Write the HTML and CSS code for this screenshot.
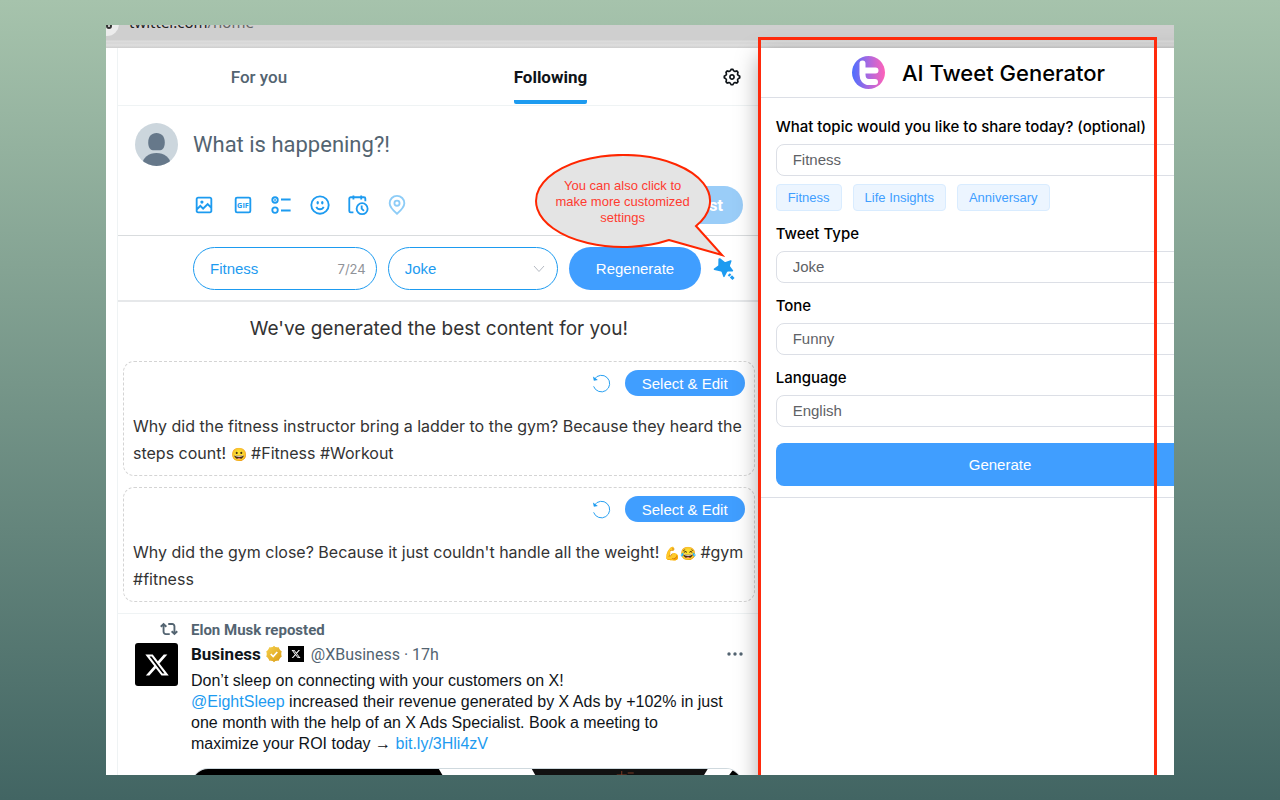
FILE: index.html
```html
<!DOCTYPE html>
<html lang="en">
<head>
<meta charset="utf-8">
<meta name="viewport" content="width=device-width, initial-scale=1">
<title>AI Tweet Generator</title>
<link rel="stylesheet" href="styles.css">
</head>
<body>
<div class="stage">
  <div class="browser-bar">
    <svg class="site-icon" viewBox="0 0 24 24" aria-hidden="true"><circle cx="12" cy="12" r="12" fill="#ececec"/><circle cx="8" cy="13" r="2" fill="none" stroke="#333" stroke-width="2"/><circle cx="14" cy="14" r="2" fill="none" stroke="#333" stroke-width="2"/></svg>
    <span class="address">twitter.com<span class="address-path">/home</span></span>
  </div>
  <div class="content">
    <main class="feed">
      <nav class="tabs">
        <a class="tab" href="#">For you</a>
        <a class="tab tab-active" href="#"><span class="tab-label">Following</span></a>
        <button class="icon-button settings" aria-label="Timeline settings">
          <svg viewBox="0 0 24 24" aria-hidden="true"><path d="M10.54 1.75h2.92l1.57 2.36c.11.17.32.25.53.21l2.53-.59 2.17 2.17-.58 2.54c-.05.2.04.41.21.53l2.36 1.57v2.92l-2.36 1.57c-.17.12-.26.33-.21.53l.58 2.54-2.17 2.17-2.53-.59c-.21-.04-.42.04-.53.21l-1.57 2.36h-2.92l-1.58-2.36c-.11-.17-.32-.25-.52-.21l-2.54.59-2.17-2.17.58-2.54c.05-.2-.03-.41-.21-.53l-2.35-1.57v-2.92L4.1 8.97c.18-.12.26-.33.21-.53L3.73 5.9 5.9 3.73l2.54.59c.2.04.41-.04.52-.21l1.58-2.36zm1.07 2l-.98 1.47C10.05 6.08 9 6.5 7.99 6.27l-1.46-.34-.6.6.33 1.46c.24 1.01-.18 2.07-1.05 2.64l-1.46.98v.78l1.46.98c.87.57 1.29 1.63 1.05 2.64l-.33 1.46.6.6 1.46-.34c1.01-.23 2.06.19 2.64 1.05l.98 1.47h.78l.97-1.47c.58-.86 1.63-1.28 2.65-1.05l1.45.34.61-.6-.34-1.46c-.23-1.01.18-2.07 1.05-2.64l1.47-.98v-.78l-1.47-.98c-.87-.57-1.28-1.63-1.05-2.64l.34-1.46-.61-.6-1.45.34c-1.02.23-2.07-.19-2.65-1.05l-.97-1.47h-.78zM12 10.5c-.83 0-1.5.67-1.5 1.5s.67 1.5 1.5 1.5c.82 0 1.5-.67 1.5-1.5s-.68-1.5-1.5-1.5zM8.5 12c0-1.93 1.56-3.5 3.5-3.5 1.93 0 3.5 1.57 3.5 3.5s-1.57 3.5-3.5 3.5c-1.94 0-3.5-1.57-3.5-3.5z"/></svg>
        </button>
      </nav>

      <section class="composer">
        <svg class="avatar" viewBox="0 0 43 43" aria-hidden="true">
          <defs><clipPath id="avatar-clip"><circle cx="21.500" cy="21.500" r="21.500"/></clipPath></defs>
          <g clip-path="url(#avatar-clip)"><rect width="43" height="43" fill="#ccd6dd"/><path d="M21.500 10c5 0 8.300 3.500 8.300 9.500 0 5-2.300 7.700-4.500 7.700h-7.600c-2.200 0-4.500-2.700-4.500-7.700 0-6 3.300-9.500 8.300-9.500z" fill="#66788a"/><ellipse cx="21.500" cy="41" rx="14" ry="11" fill="#66788a"/></g>
        </svg>
        <div class="composer-body">
          <input class="compose-input" type="text" placeholder="What is happening?!" aria-label="Post text">
          <div class="composer-actions">
            <div class="composer-tools">
              <button class="icon-button" aria-label="Media"><svg viewBox="0 0 24 24"><path d="M3 5.500C3 4.119 4.119 3 5.500 3h13C19.881 3 21 4.119 21 5.500v13c0 1.381-1.119 2.500-2.500 2.500h-13C4.119 21 3 19.881 3 18.500v-13zM5.500 5c-.276 0-.5.224-.5.5v9.086l3-3 3 3 5-5 3 3V5.500c0-.276-.224-.5-.5-.5h-13zM19 15.414l-3-3-5 5-3-3-3 3V18.500c0 .276.224.5.5.5h13c.276 0 .5-.224.5-.5v-3.086zM9.750 7C8.784 7 8 7.784 8 8.750s.784 1.750 1.750 1.750 1.750-.784 1.750-1.750S10.716 7 9.750 7z"/></svg></button>
              <button class="icon-button" aria-label="GIF"><svg viewBox="0 0 24 24"><rect class="line" x="4" y="4" width="16" height="16" rx="1.500"/><text class="gif-text" x="12" y="15" text-anchor="middle">GIF</text></svg></button>
              <button class="icon-button" aria-label="Poll"><svg viewBox="0 0 24 24"><g class="line"><circle cx="5.500" cy="6.500" r="3"/><circle cx="5.500" cy="17.500" r="3"/><path d="M12 6h10.500M12 18h10.500"/></g><circle cx="5.500" cy="6.500" r="1"/></svg></button>
              <button class="icon-button" aria-label="Emoji"><svg viewBox="0 0 24 24"><g class="line"><circle cx="12" cy="12" r="9.500"/><path d="M8 14c1.500 3.500 6.500 3.500 8 0"/></g><ellipse cx="9.500" cy="9.500" rx="1.300" ry="2"/><ellipse cx="14.500" cy="9.500" rx="1.300" ry="2"/></svg></button>
              <button class="icon-button" aria-label="Schedule"><svg viewBox="0 0 24 24"><g class="line"><path d="M7 1.500V6M15.500 1.500V6M20 8V5c0-.8-.7-1.500-1.500-1.500H4C3.200 3.500 2.500 4.200 2.500 5v13.500c0 .8.700 1.500 1.500 1.500h3"/><circle cx="16.500" cy="16" r="6"/><path d="M16 12.500V16l2.500 2.500"/></g></svg></button>
              <button class="icon-button" aria-label="Location" disabled><svg viewBox="0 0 24 24"><g class="line"><path d="M12 21.500C8.500 18.500 4 14.500 4 10a8 8 0 0116 0c0 4.500-4.500 8.500-8 11.500z"/><circle cx="12" cy="10" r="2.800"/></g></svg></button>
            </div>
            <button class="post-button" disabled>Post</button>
          </div>
        </div>
      </section>

      <section class="ai-toolbar">
        <div class="pill-field">
          <input class="pill-input" type="text" value="Fitness" maxlength="24" aria-label="Topic">
          <span class="counter">7/24</span>
        </div>
        <div class="pill-field">
          <select class="pill-input" aria-label="Tweet type"><option>Joke</option></select>
          <svg class="chevron" viewBox="0 0 12 8" aria-hidden="true"><path d="M1 1l5 5.500L11 1"/></svg>
        </div>
        <button class="primary regenerate">Regenerate</button>
        <button class="icon-button magic" aria-label="More settings">
          <svg viewBox="0 0 24 24"><path d="M8.500 1.500l4 3.200c.3.200.6.300 1 .2l5-1.700c.7-.2 1.200.3 1 1l-1.500 4.300c-.1.400 0 .7.200 1l2.800 3.800c.4.600.1 1.200-.6 1.200h-4.400c-.4 0-.7.200-.9.500l-2.500 4.700c-.3.600-1 .6-1.300 0l-1.600-4.500c-.1-.3-.4-.6-.8-.7L2.300 13c-.7-.2-.8-1-.2-1.400l3.800-2.800c.3-.2.400-.5.400-.9l.1-5.700c0-.9 1.300-1.400 2.100-.7z"/><path d="M16.800 17.300l4.700 4.700" class="wand"/></svg>
        </button>
        <div class="callout">
          <svg class="callout-shape" viewBox="0 0 190 104" aria-hidden="true"><path d="M134 86L187 101L161 72A87 46 0 1 0 134 86Z"/></svg>
          <p class="callout-text">You can also click to make more customized settings</p>
        </div>
      </section>

      <section class="results">
        <h2 class="results-title">We've generated the best content for you!</h2>
        <article class="suggestion">
          <div class="suggestion-actions">
            <button class="icon-button refresh" aria-label="Regenerate this one"><svg viewBox="0 0 20 20"><path class="arc" d="M2.500 5.500a8.700 8.700 0 11-.8 7.500"/><path d="M1 2.500l1 4.500 4.200-.6z"/></svg></button>
            <button class="primary select-edit">Select &amp; Edit</button>
          </div>
          <p class="suggestion-text">Why did the fitness instructor bring a ladder to the gym? Because they heard the steps count! <span class="emoji">😀</span> #Fitness #Workout</p>
        </article>
        <article class="suggestion">
          <div class="suggestion-actions">
            <button class="icon-button refresh" aria-label="Regenerate this one"><svg viewBox="0 0 20 20"><path class="arc" d="M2.500 5.500a8.700 8.700 0 11-.8 7.500"/><path d="M1 2.500l1 4.500 4.200-.6z"/></svg></button>
            <button class="primary select-edit">Select &amp; Edit</button>
          </div>
          <p class="suggestion-text">Why did the gym close? Because it just couldn't handle all the weight! <span class="emoji">💪😂</span> #gym #fitness</p>
        </article>
      </section>

      <article class="post">
        <div class="post-gutter">
          <svg class="repost-icon" viewBox="0 0 24 24" aria-hidden="true"><path d="M4.750 3.790l4.603 4.300-1.706 1.820L6 8.380v7.370c0 .97.784 1.750 1.750 1.750H13V20H7.750c-2.347 0-4.250-1.900-4.250-4.250V8.380L1.853 9.910.147 8.090l4.603-4.300zm11.500 2.710H11V4h5.250c2.347 0 4.250 1.900 4.250 4.250v7.370l1.647-1.530 1.706 1.820-4.603 4.300-4.603-4.300 1.706-1.820L18 15.620V8.250c0-.97-.784-1.750-1.750-1.750z"/></svg>
          <svg class="brand-avatar" viewBox="0 0 43 43" aria-hidden="true"><rect width="43" height="43" rx="3"/><svg x="9" y="9" width="26" height="26" viewBox="0 0 24 24"><path fill="#fff" d="M18.244 2.250h3.308l-7.227 8.260 8.502 11.240H16.170l-5.214-6.817L4.990 21.750H1.680l7.730-8.835L1.254 2.250H8.080l4.713 6.231zm-1.161 17.520h1.833L7.084 4.126H5.117z"/></svg></svg>
        </div>
        <div class="post-body">
          <p class="reposted">Elon Musk reposted</p>
          <header class="post-header">
            <strong class="author">Business</strong>
            <svg class="verified" viewBox="0 0 22 22" aria-hidden="true"><defs><linearGradient id="gold" x1="0" y1="0" x2="1" y2="1"><stop offset="0" stop-color="#f6d24e"/><stop offset="1" stop-color="#d99a13"/></linearGradient></defs><g fill="url(#gold)"><circle cx="11" cy="11" r="9"/><path d="M11 1l2.500 2.300 3.400-.4.700 3.300 3 1.700L19.200 11l1.400 3.100-3 1.700-.7 3.300-3.400-.4L11 21l-2.500-2.300-3.400.4-.7-3.300-3-1.700L2.800 11 1.400 7.900l3-1.700.7-3.300 3.400.4z"/></g><path d="M7 11l3 3 5-5.500" fill="none" stroke="#fff" stroke-width="2"/></svg>
            <svg class="affiliate" viewBox="0 0 16 16" aria-hidden="true"><rect width="16" height="16"/><svg x="3" y="3" width="10" height="10" viewBox="0 0 24 24"><path fill="#fff" d="M18.244 2.250h3.308l-7.227 8.260 8.502 11.240H16.170l-5.214-6.817L4.990 21.750H1.680l7.730-8.835L1.254 2.250H8.080l4.713 6.231zm-1.161 17.520h1.833L7.084 4.126H5.117z"/></svg></svg>
            <span class="handle">@XBusiness · 17h</span>
            <button class="icon-button more" aria-label="More"><svg viewBox="0 0 16 4"><circle cx="2" cy="2" r="1.700"/><circle cx="8" cy="2" r="1.700"/><circle cx="14" cy="2" r="1.700"/></svg></button>
          </header>
          <p class="post-text">Don’t sleep on connecting with your customers on X!<br><a href="#">@EightSleep</a> increased their revenue generated by X Ads by +102% in just one month with the help of an X Ads Specialist. Book a meeting to maximize your ROI today → <a href="#">bit.ly/3Hli4zV</a></p>
          <div class="media">
            <svg viewBox="0 0 550 300" preserveAspectRatio="xMidYMin slice" aria-hidden="true"><rect width="550" height="300" fill="#fff"/><path d="M0 0h247l180 300H0z"/><path d="M340 0h176l-90 150z" fill="#111"/><path d="M430 2v4M425 6h10M436 4h6" stroke="#7a3b25"/><path d="M542 0l-30 40h38V0z"/></svg>
          </div>
        </div>
      </article>
    </main>

    <aside class="side">
      <form class="panel">
        <header class="panel-header">
          <svg class="logo" viewBox="0 0 33 33" aria-hidden="true"><defs><linearGradient id="brand" x1="0" y1="0" x2="1" y2="0"><stop offset="0" stop-color="#4b6fff"/><stop offset=".55" stop-color="#b468dc"/><stop offset="1" stop-color="#ff62b8"/></linearGradient></defs><circle cx="16.500" cy="16.500" r="16.500" fill="url(#brand)"/><path d="M10.500 7.500v11c0 4.500 2.500 7.500 6.500 7.500h6M10.500 14.500h13" fill="none" stroke="#fff" stroke-width="6" stroke-linecap="round" stroke-linejoin="round"/></svg>
          <h1 class="panel-title">AI Tweet Generator</h1>
        </header>
        <div class="fields">
          <div class="field">
            <label for="topic">What topic would you like to share today? (optional)</label>
            <input class="control" id="topic" type="text" value="Fitness">
            <div class="chips">
              <button type="button" class="chip">Fitness</button>
              <button type="button" class="chip">Life Insights</button>
              <button type="button" class="chip">Anniversary</button>
            </div>
          </div>
          <div class="field">
            <label for="type">Tweet Type</label>
            <select class="control" id="type"><option>Joke</option></select>
          </div>
          <div class="field">
            <label for="tone">Tone</label>
            <select class="control" id="tone"><option>Funny</option></select>
          </div>
          <div class="field">
            <label for="language">Language</label>
            <select class="control" id="language"><option>English</option></select>
          </div>
          <button type="button" class="primary generate">Generate</button>
        </div>
      </form>
      <div class="highlight"></div>
    </aside>
  </div>
</div>
</body>
</html>
```
FILE: styles.css
```css
* { box-sizing: border-box; }

body {
  margin: 0;
  height: 100vh;
  padding: 25px 106px;
  overflow: hidden;
  background: linear-gradient(#a6c3ac, #426563);
  font-family: "Liberation Sans", Arial, sans-serif;
  color: #333;
}

p, h1, h2 { margin: 0; }
a { color: #1d9bf0; text-decoration: none; }
button, input, select { font: inherit; color: inherit; }
button { border: 0; padding: 0; background: none; cursor: pointer; }

.stage {
  display: flex;
  flex-direction: column;
  height: 100%;
  overflow: hidden;
  background: #fff;
}

.browser-bar {
  flex: none;
  display: flex;
  height: 23px;
  overflow: hidden;
  background: linear-gradient(#cfcfcf 15px, #dedede 16px, #d6d6d6 18px, #dfdfdf 20px, #d4d4d4 22px, #cccccc);
}
.site-icon { width: 24px; height: 24px; margin: -13px 0 0 -11px; }
.address {
  margin: -13px 0 0 10px;
  font: 15px/20px "Noto Sans", sans-serif;
  color: #222;
}
.address-path { color: #666; }

.content {
  flex: 1;
  min-height: 0;
  display: grid;
  grid-template-columns: minmax(0, 11fr) minmax(0, 7fr);
}

.feed {
  margin-left: 11px;
  border-left: 1px solid #eff3f4;
  font-family: Roboto, sans-serif;
}

.icon-button { display: flex; align-items: center; justify-content: center; }
.icon-button svg { display: block; width: 22px; height: 22px; fill: currentColor; }
.icon-button .line { fill: none; stroke: currentColor; stroke-width: 2; }

.tabs {
  display: grid;
  grid-template-columns: 44% 47% auto;
  height: 58px;
  border-bottom: 1px solid #eff3f4;
}
.tab {
  display: flex;
  justify-content: center;
  color: #536471;
  font-size: 17px;
  font-weight: 500;
  line-height: 58px;
}
.tab-active { color: #0f1419; font-weight: 700; }
.tab-label {
  height: 56px;
  border-bottom: 4px solid #1d9bf0;
  border-radius: 2px;
}
.settings { color: #0f1419; justify-content: flex-start; padding-left: 21px; }
.settings svg { width: 20px; }

.composer {
  display: flex;
  gap: 15px;
  padding: 17px 16px 11px 17px;
}
.avatar { flex: none; width: 43px; height: 43px; }
.composer-body { flex: 1; min-width: 0; }
.compose-input {
  display: block;
  width: 100%;
  height: 43px;
  padding: 0;
  border: 0;
  outline: 0;
  background: none;
  font-size: 22px;
}
.compose-input::placeholder { color: #536471; opacity: 1; }
.composer-actions {
  display: flex;
  justify-content: space-between;
  align-items: center;
  margin-top: 20px;
}
.composer-tools {
  display: flex;
  justify-content: space-between;
  width: 215px;
  color: #1d9bf0;
}
.composer-tools [disabled] { opacity: 0.5; }
.gif-text { font: 700 8px "Open Sans", sans-serif; }
.post-button {
  width: 74px;
  height: 38px;
  border-radius: 19px;
  background: #9acdf8;
  color: #fff;
  font-size: 17px;
  font-weight: 700;
}

.ai-toolbar {
  position: relative;
  display: grid;
  grid-template-columns: minmax(0, 14fr) minmax(0, 13fr) minmax(0, 10fr) 24px;
  gap: 11px;
  padding: 11px 23px 10px 75px;
  border-top: 1px solid #d9dcde;
  border-bottom: 2px solid #e6e8ea;
  font-family: "Liberation Sans", Arial, sans-serif;
}
.pill-field {
  display: flex;
  align-items: center;
  height: 43px;
  padding: 0 10px 0 16px;
  border: 1px solid #1d9bf0;
  border-radius: 22px;
}
.pill-input {
  flex: 1;
  min-width: 0;
  padding: 0;
  border: 0;
  outline: 0;
  appearance: none;
  background: none;
  color: #1d9bf0;
  font-size: 15px;
}
.counter { color: #909399; font: 13px Inter, sans-serif; }
.chevron { width: 12px; height: 8px; margin-right: 2px; fill: none; stroke: #b4b9c2; }
.primary { background: #409eff; color: #fff; font-size: 15px; }
.regenerate { border-radius: 22px; }
.magic { color: #1d9bf0; }
.magic svg { width: 24px; height: 24px; }
.wand { fill: none; stroke: currentColor; stroke-width: 3; stroke-dasharray: 2 1 4; }

.callout {
  position: absolute;
  top: -82px;
  right: 34px;
  width: 190px;
}
.callout-shape { display: block; width: 100%; fill: #e4e4e4; stroke: #ff2600; stroke-width: 2; }
.callout-text {
  position: absolute;
  top: 24px;
  left: 18px;
  width: 140px;
  color: #ff3b30;
  font-size: 13px;
  line-height: 16px;
  text-align: center;
}

.results {
  padding: 14px 4px 11px 5px;
  border-bottom: 1px solid #eff3f4;
  font-family: Inter, sans-serif;
}
.results-title {
  margin-bottom: 19px;
  font-size: 19px;
  font-weight: 400;
  line-height: 26px;
  text-align: center;
}
.suggestion {
  height: 115px;
  padding: 8px 9px;
  border: 1px dashed #d4d4d4;
  border-radius: 11px;
}
.suggestion + .suggestion { margin-top: 11px; }
.suggestion-actions { display: flex; justify-content: flex-end; gap: 14px; }
.refresh { color: #1d9bf0; }
.refresh svg { width: 19px; height: 19px; }
.refresh .arc { fill: none; stroke: currentColor; stroke-width: 1; }
.select-edit {
  width: 120px;
  height: 26px;
  border-radius: 13px;
  font-family: "Liberation Sans", Arial, sans-serif;
}
.suggestion-text { margin-top: 17px; font-size: 16px; line-height: 27px; }
.emoji { font-size: 13px; line-height: 1; }

.post { display: flex; gap: 13px; padding: 6px 16px 0 17px; }
.post-gutter { display: flex; flex-direction: column; align-items: flex-end; gap: 5px; flex: none; }
.repost-icon { width: 18px; height: 18px; fill: #536471; }
.brand-avatar { width: 43px; height: 43px; }
.post-body { flex: 1; min-width: 0; color: #0f1419; }
.reposted { color: #536471; font-size: 15px; font-weight: 700; line-height: 20px; }
.post-header { display: flex; align-items: center; gap: 4px; height: 28px; margin-bottom: 2px; font-size: 16px; }
.author { font-size: 17px; }
.verified { width: 18px; height: 18px; }
.affiliate { width: 16px; height: 16px; margin-left: 1px; }
.handle { color: #536471; margin-left: 3px; }
.more { margin-left: auto; color: #536471; }
.more svg { width: 16px; height: 4px; }
.post-text { padding-right: 16px; font: 16px/21px "Liberation Sans", Arial, sans-serif; }
.media {
  margin-top: 14px;
  height: 300px;
  overflow: hidden;
  border: 1px solid #cfd9de;
  border-radius: 17px;
}
.media svg { display: block; width: 100%; height: 100%; }

.side { position: relative; }
.panel {
  width: 116%;
  height: 100%;
  background: #fff;
  box-shadow: 0 8px 22px rgba(0, 0, 0, 0.35);
}
.panel-header {
  display: flex;
  align-items: center;
  justify-content: center;
  gap: 17px;
  height: 50px;
  padding-right: 42px;
  border-bottom: 1px solid #dcdfe6;
}
.logo { width: 33px; height: 33px; }
.panel-title { color: #000; font: 500 22px/30px Inter, sans-serif; }
.fields {
  display: flex;
  flex-direction: column;
  gap: 11px;
  padding: 17px 16px 11px 17px;
  border-bottom: 1px solid #dcdfe6;
}
.field { display: flex; flex-direction: column; }
.field label {
  margin-bottom: 5px;
  color: #000;
  font: 500 15px/24px Inter, sans-serif;
}
.control {
  width: 100%;
  height: 32px;
  padding: 0 16px 2px;
  border: 1px solid #dcdfe6;
  border-radius: 8px;
  appearance: none;
  background: #fff;
  color: #606266;
  font-size: 15px;
}
.chips { display: flex; gap: 11px; margin-top: 8px; }
.chip {
  height: 27px;
  padding: 0 11px;
  border: 1px solid #d9ecff;
  border-radius: 4px;
  background: #ecf5ff;
  color: #409eff;
  font-size: 13px;
}
.generate { height: 43px; margin-top: 5px; border-radius: 8px; }

/* Outline drawn around the side panel */
.highlight {
  position: absolute;
  inset: -11px 17px -10px -1px;
  border: 3px solid #ff2a0c;
  pointer-events: none;
}
```
